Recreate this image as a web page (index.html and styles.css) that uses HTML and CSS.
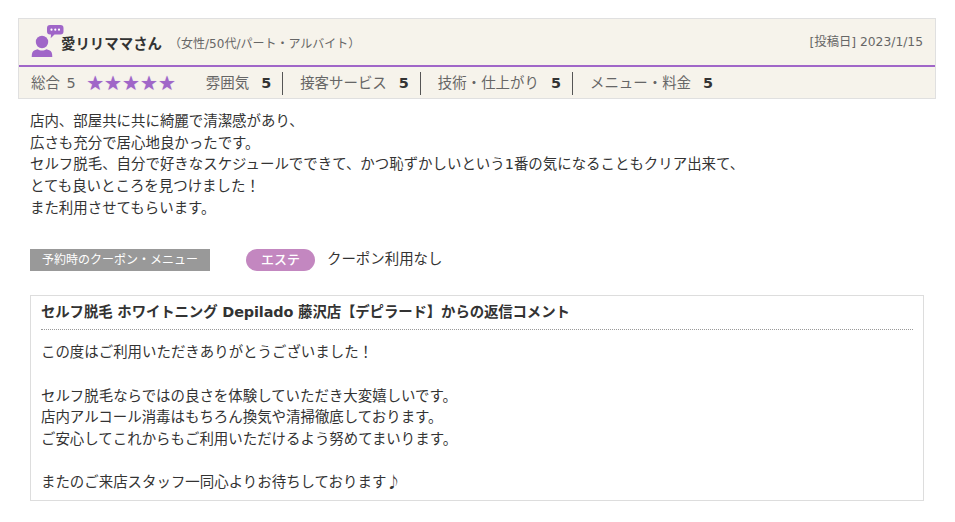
FILE: index.html
```html
<!DOCTYPE html>
<html lang="ja">
<head>
  <meta charset="UTF-8">
  <title>口コミ</title>
  <link rel="stylesheet" href="styles.css">
</head>
<body>
  <div class="review">
    <div class="review-head">
      <div class="head-top">
        <svg class="user-icon" width="33" height="32" viewBox="0 0 33 32">
          <circle fill="#a066c8" cx="11" cy="17" r="6.200"/>
          <path fill="#a066c8" d="M0.700 32c0-4 1-6 3-6.700l2.800-1c2.500 1.600 6.500 1.600 9 0l2.800 1c2 .7 3 2.700 3 6.700z"/>
          <path fill="#a066c8" d="M19 0h10.500a3 3 0 0 1 3 3v3.500a3 3 0 0 1-3 3h-6l-3.800 3.800l.3-3.800h-1a3 3 0 0 1-3-3v-3.500a3 3 0 0 1 3-3z"/>
          <circle fill="#fff" cx="20.500" cy="4.700" r="1.100"/>
          <circle fill="#fff" cx="24.300" cy="4.700" r="1.100"/>
          <circle fill="#fff" cx="28" cy="4.700" r="1.100"/>
        </svg>
        <span class="user-name">愛リリママさん</span>
        <span class="user-info">（女性/50代/パート・アルバイト）</span>
        <span class="post-date">[投稿日] 2023/1/15</span>
      </div>
      <div class="head-rates">
        <span class="total">総合 5</span>
        <span class="stars">★★★★★</span>
        <span class="rate first">雰囲気<b>5</b></span>
        <span class="rate">接客サービス<b>5</b></span>
        <span class="rate">技術・仕上がり<b>5</b></span>
        <span class="rate last">メニュー・料金<b>5</b></span>
      </div>
    </div>

    <p class="review-body">店内、部屋共に共に綺麗で清潔感があり、<br>
      広さも充分で居心地良かったです。<br>
      セルフ脱毛、自分で好きなスケジュールでできて、かつ恥ずかしいという1番の気になることもクリア出来て、<br>
      とても良いところを見つけました！<br>
      また利用させてもらいます。</p>

    <div class="coupon">
      <span class="coupon-label">予約時のクーポン・メニュー</span>
      <span class="coupon-tag">エステ</span>
      <span class="coupon-name">クーポン利用なし</span>
    </div>

    <div class="reply">
      <div class="reply-title">セルフ脱毛 ホワイトニング Depilado 藤沢店【デピラード】からの返信コメント</div>
      <p class="reply-body">この度はご利用いただきありがとうございました！<br>
        <br>
        セルフ脱毛ならではの良さを体験していただき大変嬉しいです。<br>
        店内アルコール消毒はもちろん換気や清掃徹底しております。<br>
        ご安心してこれからもご利用いただけるよう努めてまいります。<br>
        <br>
        またのご来店スタッフ一同心よりお待ちしております<span class="note">♪</span></p>
    </div>
  </div>
</body>
</html>
```

FILE: styles.css
```css
body {
  margin: 0;
  background: #fff;
  color: #333;
  font-family: "DejaVu Sans", "Noto Sans CJK JP", sans-serif;
  font-size: 14.45px;
  line-height: 21.7px;
}

.review {
  width: 918px;
  margin: 18px 0 0 18px;
}

.review-head {
  background: #f6f3eb;
  border: 1px solid #e0e0e0;
}

.head-top {
  display: flex;
  align-items: center;
  height: 46px;
  padding: 0 12px;
  border-bottom: 2px solid #a066c8;
}

.user-icon {
  flex: none;
  align-self: flex-start;
  margin: 6px -3px 0 0;
}

.user-name {
  font-weight: 700;
  margin-top: 6px;
}

.user-info {
  margin: 6px 0 0 7px;
  font-size: 12px;
  color: #666;
}

.post-date {
  margin: 2px 0 0 auto;
  font-size: 12.300px;
  color: #666;
}

.head-rates {
  display: flex;
  align-items: center;
  box-sizing: border-box;
  height: 31px;
  padding: 2px 0 0 12px;
  color: #666;
}

.total {
  word-spacing: 2px;
}

.stars {
  margin-left: 10.500px;
  font-size: 20px;
  color: #a066c8;
  text-shadow: 0 0 1px #c9a8de;
}

.rate {
  padding: 0 11px 0 17px;
  line-height: 23px;
  border-right: 1px solid #555;
}

.rate.first {
  margin-left: 13px;
}

.rate.last {
  border-right: 0;
}

.rate b {
  margin-left: 12px;
  color: #333;
}

.review-body {
  margin: 12px 0 0 12px;
}

.coupon {
  display: flex;
  align-items: center;
  margin: 29px 0 0 12px;
}

.coupon-label {
  width: 180px;
  height: 22px;
  background: #999;
  color: #fff;
  font-size: 12px;
  line-height: 22px;
  text-align: center;
}

.coupon-tag {
  width: 69px;
  height: 22px;
  margin-left: 36px;
  background: #c387c0;
  border-radius: 11px;
  color: #fff;
  font-size: 13px;
  font-weight: 500;
  line-height: 22px;
  text-align: center;
}

.coupon-name {
  margin-left: 12px;
}

.reply {
  box-sizing: border-box;
  width: 894px;
  margin: 24px 0 0 12px;
  border: 1px solid #ddd;
  padding: 0 10px;
}

.reply-title {
  padding: 6px 0;
  font-weight: 700;
  letter-spacing: -0.140px;
  border-bottom: 1px dotted #999;
}

.reply-body {
  margin: 12px 0 6px;
}

.note {
  font-family: "Noto Sans CJK JP", sans-serif;
  line-height: 0;
}
```
